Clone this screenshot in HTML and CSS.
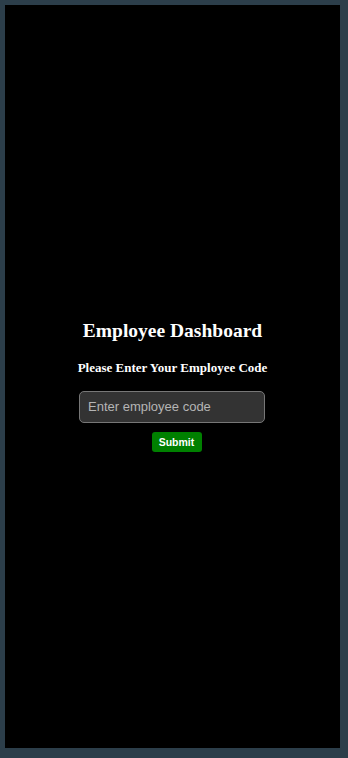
FILE: index.html
```html
<!DOCTYPE html>
<html lang="en">
<head>
    <meta charset="UTF-8">
    <meta name="viewport" content="width=device-width, initial-scale=1.0">
    <title>Employee Dashboard</title>
    <link rel="stylesheet" href="styles.css">
</head>
<body>

<div class="page">
    <div class="login-box">
        <h1>Employee Dashboard</h1>
        <h3>Please Enter Your Employee Code</h3>
        <input type="text" id="empCode" placeholder="Enter employee code">
        <button id="submitBtn">Submit</button>
    </div>
</div>

</body>
</html>
```

FILE: styles.css
```css
* {
    margin: 0;
    padding: 0;
    box-sizing: border-box;
}

html, body {
    height: 100%;
}

body {
    font-family: "Liberation Serif", "Times New Roman", serif;
    background-color: #2c3e4a;
    padding: 5px 8px 10px 5px;
}

.page {
    height: 100%;
    background-color: #000;
    display: flex;
    justify-content: center;
    align-items: center;
}

.login-box {
    display: flex;
    flex-direction: column;
    align-items: center;
    padding-top: 18px;
    color: #fff;
}

.login-box h1 {
    font-size: 19.5px;
    margin-bottom: 18px;
}

.login-box h3 {
    font-size: 13px;
    margin-bottom: 15px;
}

.login-box input {
    width: 186px;
    height: 32px;
    padding: 0 8px;
    margin-right: 1px;
    background-color: #333;
    border: 1px solid #777;
    border-radius: 5px;
    color: #fff;
    font-family: "Liberation Sans", Arial, sans-serif;
    font-size: 13px;
    outline: none;
}

.login-box input::placeholder {
    color: #b5b5b5;
}

.login-box button {
    margin-top: 9px;
    margin-left: 8px;
    width: 50px;
    height: 20px;
    background-color: #008000;
    border: none;
    border-radius: 3px;
    color: #fff;
    font-family: "Liberation Sans", Arial, sans-serif;
    font-weight: bold;
    font-size: 10.5px;
    cursor: pointer;
}
```
